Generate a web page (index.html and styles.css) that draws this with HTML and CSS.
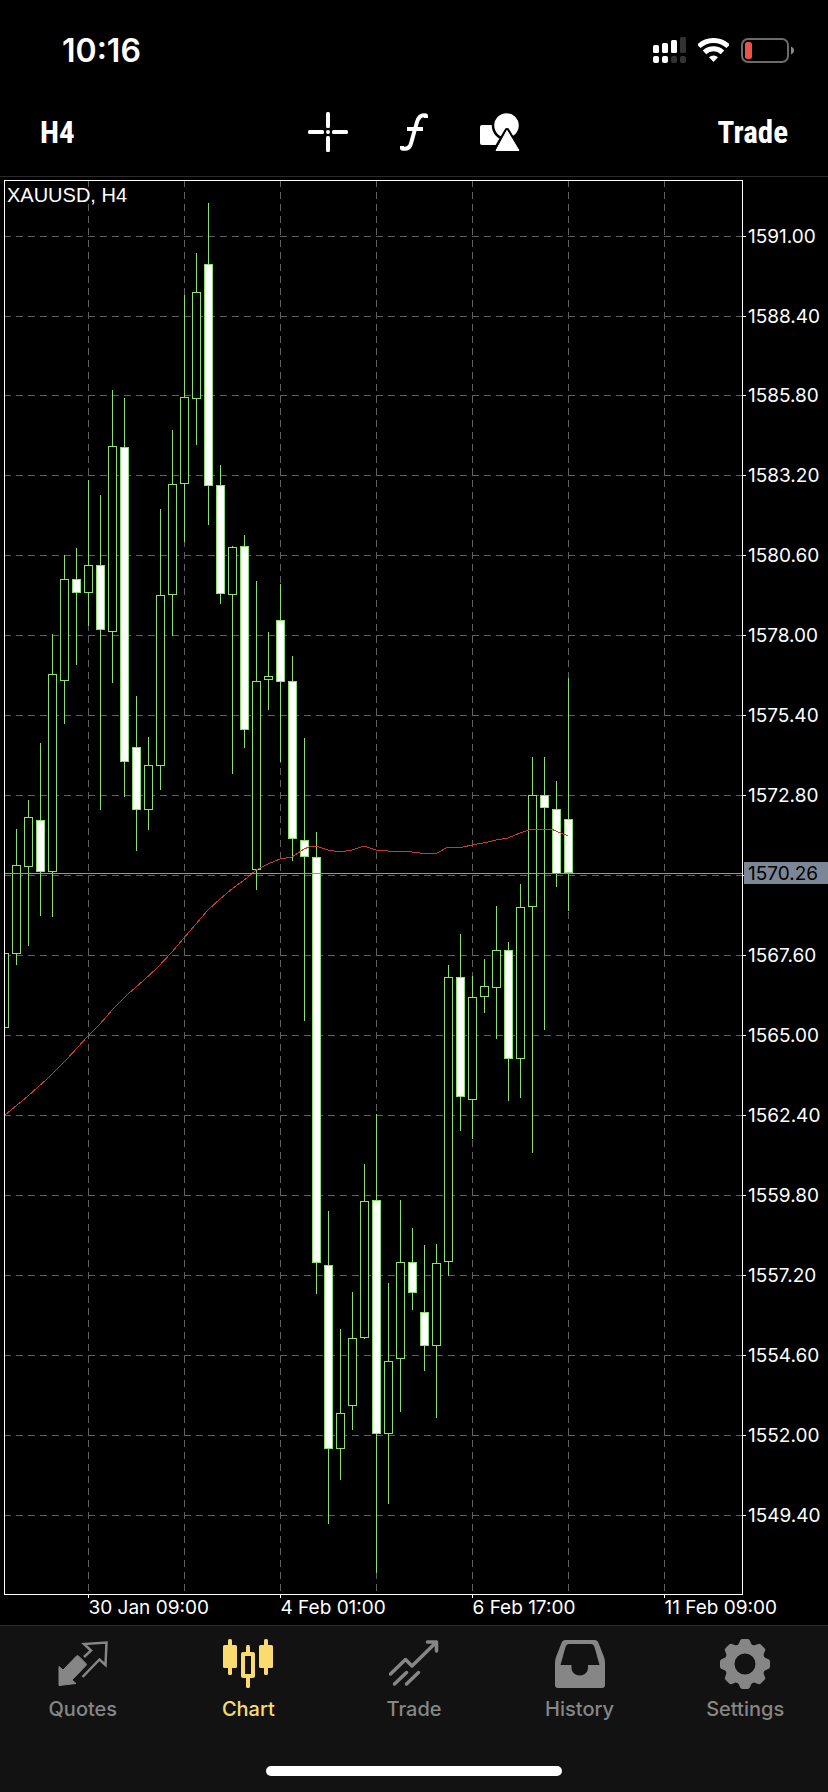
FILE: index.html
```
<!DOCTYPE html>
<html lang="en">
<head>
    <meta charset="UTF-8">
    <meta name="viewport" content="width=device-width, initial-scale=1.0">
    <title>XAUUSD, H4</title>
    <link rel="stylesheet" href="styles.css">
</head>
<body>
<div class="app">
    <header>
        <div class="status-bar">
            <span class="clock">10:16</span>
            <div class="status-icons">
                <svg width="33" height="26" viewBox="0 0 33 26" fill="#fff">
                    <rect x="0" y="8" width="6" height="8" rx="1.5"/>
                    <rect x="9" y="6" width="6" height="10" rx="1.5"/>
                    <rect x="18" y="3" width="6" height="13" rx="1.5"/>
                    <rect x="27" y="0" width="6" height="16" rx="1.5" fill="#333"/>
                    <rect x="0" y="19" width="6" height="7" rx="2"/>
                    <rect x="9" y="19" width="6" height="7" rx="2"/>
                    <rect x="18" y="19" width="6" height="7" rx="2" fill="#333"/>
                    <rect x="27" y="19" width="6" height="7" rx="2" fill="#333"/>
                </svg>
                <svg width="31" height="24" viewBox="0 0 31 24" fill="none" stroke="#fff" stroke-width="5">
                    <path d="M0.8 8.3A21.5 21.5 0 0 1 30.2 8.3"/>
                    <path d="M6.5 14.4A13.2 13.2 0 0 1 24.5 14.4"/>
                    <path d="M15.5 24L11 19.3A6.5 6.5 0 0 1 20 19.3Z" fill="#fff" stroke="none"/>
                </svg>
                <svg width="53" height="25" viewBox="0 0 53 25">
                    <rect x="1" y="1" width="46" height="23" rx="6" fill="none" stroke="#6b6b6b" stroke-width="2"/>
                    <path d="M50 8.5C54 10 54 15 50 16.5Z" fill="#8a8a8a"/>
                    <rect x="4" y="4" width="7" height="17" rx="2.5" fill="#eb5545"/>
                </svg>
            </div>
        </div>
        <div class="toolbar">
            <button class="text-button">H4</button>
            <div class="tools">
                <button class="icon-button" aria-label="Crosshair">
                    <svg width="40" height="40" viewBox="0 0 40 40" fill="#fff">
                        <rect x="18" y="0" width="4" height="16" rx="1.5"/>
                        <rect x="18" y="24" width="4" height="16" rx="1.5"/>
                        <rect x="0" y="18" width="16" height="4" rx="1.5"/>
                        <rect x="24" y="18" width="16" height="4" rx="1.5"/>
                        <circle cx="20" cy="20" r="2"/>
                    </svg>
                </button>
                <button class="icon-button" aria-label="Indicators">
                    <svg width="40" height="40" viewBox="0 0 40 40" fill="none" stroke="#fff" stroke-width="4">
                        <path d="M32 6V3.5C27 2.5 24.5 5 23 10L17 31.5C16 35.5 13 37.5 8 36.5V34" stroke-linejoin="round"/>
                        <path d="M13 17H29"/>
                    </svg>
                </button>
                <button class="icon-button" aria-label="Objects">
                    <svg width="40" height="40" viewBox="0 0 40 40" fill="#fff">
                        <rect x="0" y="13" width="21" height="20" rx="2"/>
                        <circle cx="26.5" cy="13.5" r="13.5" stroke="#000" stroke-width="2.5"/>
                        <path d="M27 18.5L39.5 39H15Z" stroke="#000" stroke-width="5" stroke-linejoin="round"/>
                        <path d="M27 18.5L39 38.5H16Z" stroke="#fff" stroke-width="1" stroke-linejoin="round"/>
                    </svg>
                </button>
            </div>
            <button class="text-button trade-button">Trade</button>
        </div>
    </header>

    <main>
        <svg id="chart" class="chart" viewBox="0 177 828 1448" role="img" aria-label="XAUUSD, H4"></svg>
    </main>

    <nav class="tab-bar">
        <div class="tabs">
            <a href="#quotes" class="tab">
                <svg width="50" height="50" viewBox="0 0 50 50">
                    <path d="M1 27.5L5 31L18.5 17Q19.5 16 20.5 17L28 24.5Q29 25.5 28 26.5L14 41L18 44.5L1 46.5Z" fill="currentColor" stroke="currentColor" stroke-linejoin="round"/>
                    <path d="M24.5 38L41.5 20.5L47.5 26L48.5 3.5L26 5L33 11.5L26 18" fill="none" stroke="currentColor" stroke-width="2.5"/>
                </svg>
                <span>Quotes</span>
            </a>
            <a href="#chart" class="tab active">
                <svg width="50" height="50" viewBox="0 0 50 50" fill="currentColor">
                    <rect x="5" y="0" width="4" height="36" rx="1.5"/>
                    <rect x="0" y="6" width="14" height="23" rx="1.5"/>
                    <rect x="41" y="0" width="4" height="36" rx="1.5"/>
                    <rect x="36" y="6" width="14" height="23" rx="1.5"/>
                    <rect x="23" y="6" width="4" height="9" rx="1.5"/>
                    <rect x="23" y="37" width="4" height="12" rx="1.5"/>
                    <rect x="20" y="15" width="10" height="22" fill="none" stroke="currentColor" stroke-width="4" stroke-linejoin="round"/>
                </svg>
                <span>Chart</span>
            </a>
            <a href="#trade" class="tab">
                <svg width="50" height="50" viewBox="0 0 50 50" fill="none" stroke="currentColor" stroke-width="3.5" stroke-linecap="round" stroke-linejoin="round">
                    <path d="M1.5 35L16.5 20.5L23 27L47 3.5"/>
                    <path d="M38.5 3H47.5V12"/>
                    <path d="M5.5 45L17.5 33.5M17.5 45L29.5 33.5"/>
                </svg>
                <span>Trade</span>
            </a>
            <a href="#history" class="tab">
                <svg width="50" height="50" viewBox="0 0 50 50" fill="currentColor">
                    <path fill-rule="evenodd" d="M10.5 1H39.5Q42.5 1 43.5 4L49 18Q50 21 50 24V46Q50 49 47 49H3Q0 49 0 46V24Q0 21 1 18L6.5 4Q7.5 1 10.5 1ZM5.5 26H16.5V28.5C16.5 39 33 39 33 28.5V26H44.5L39.5 8Q38.5 5 36 5H14Q11.5 5 10.5 8Z"/>
                </svg>
                <span>History</span>
            </a>
            <a href="#settings" class="tab">
                <svg width="50" height="50" viewBox="-25 -25 50 50" fill="currentColor">
                    <circle r="15.5" fill="none" stroke="currentColor" stroke-width="10"/>
                    <g id="teeth"></g>
                </svg>
                <span>Settings</span>
            </a>
        </div>
        <div class="home-indicator"></div>
    </nav>
</div>

<script>
    const chart = document.getElementById('chart');

    const area = { left: 4, top: 180, right: 742, bottom: 1594 };
    const step = 12;

    // high, body top, body bottom, low, 1 = bearish
    const candles = [
        [953, 953, 1027, 1027, 0], [829, 865, 953, 965, 0], [800, 817, 866, 946, 0], [743, 820, 871, 916, 1],
        [634, 674, 871, 917, 0], [555, 579, 680, 724, 0], [548, 579, 592, 665, 1], [480, 565, 592, 626, 0],
        [495, 565, 629, 810, 1], [390, 446, 631, 683, 0], [398, 447, 761, 797, 1], [696, 747, 809, 851, 1],
        [737, 765, 809, 830, 0], [509, 595, 765, 790, 0], [430, 484, 594, 636, 0], [295, 397, 483, 542, 0],
        [253, 292, 398, 445, 0], [203, 264, 485, 525, 1], [465, 485, 593, 604, 1], [546, 547, 594, 774, 0],
        [535, 546, 729, 748, 1], [581, 681, 869, 890, 0], [632, 676, 679, 710, 0], [584, 620, 681, 762, 1],
        [656, 681, 838, 861, 1], [738, 840, 856, 1021, 1], [832, 857, 1262, 1294, 1], [1211, 1265, 1448, 1524, 1],
        [1329, 1413, 1448, 1480, 0], [1292, 1338, 1405, 1430, 0], [1164, 1201, 1337, 1339, 0], [1114, 1200, 1433, 1573, 1],
        [1283, 1361, 1433, 1504, 0], [1200, 1262, 1358, 1412, 0], [1228, 1262, 1292, 1310, 1], [1245, 1312, 1345, 1371, 1],
        [1244, 1263, 1345, 1418, 0], [965, 977, 1261, 1276, 0], [934, 977, 1096, 1131, 1], [976, 997, 1099, 1139, 0],
        [959, 986, 996, 1013, 0], [906, 950, 987, 1039, 0], [942, 950, 1058, 1101, 1], [884, 907, 1058, 1098, 0],
        [757, 795, 906, 1153, 0], [757, 795, 807, 1030, 1], [781, 809, 873, 887, 1], [678, 819, 872, 911, 1]
    ];

    const average = [
        [5, 1115], [28, 1096], [47, 1079], [67, 1059], [88, 1036], [100, 1024], [113, 1009], [128, 994],
        [143, 981], [158, 967], [172, 952], [184, 938], [208, 910], [220, 899], [233, 888], [247, 878],
        [256, 870], [268, 864], [280, 859], [292, 857], [304, 849], [309, 847], [316, 846], [328, 850],
        [340, 852], [352, 850], [364, 846], [376, 850], [388, 851], [403, 851], [420, 853], [437, 853],
        [448, 847], [463, 847], [472, 845], [488, 842], [496, 840], [508, 838], [520, 833], [532, 829],
        [551, 829], [556, 831], [568, 836]
    ];

    const times = ['30 Jan 09:00', '4 Feb 01:00', '6 Feb 17:00', '11 Feb 09:00'];

    function line(cls, x1, y1, x2, y2) {
        return `<line class="${cls}" x1="${x1}" y1="${y1}" x2="${x2}" y2="${y2}"/>`;
    }

    function renderChart() {
        let svg = '';

        // grid and price axis
        for (let i = 0; i <= 16; i++) {
            const row = Math.round(235.6 + i * 79.94);
            const y = row + 0.5;
            svg += line('grid', area.left, y, area.right, y);
            svg += line('frame', area.right, y, area.right + 4, y);
            if (i !== 8) {
                svg += `<text class="axis-label" x="748" y="${row + 7}">${(1591 - i * 2.6).toFixed(2)}</text>`;
            }
        }
        for (let i = 0; i < 7; i++) {
            const x = 88.5 + i * 8 * step;
            svg += line('grid', x, area.top, x, area.bottom);
            if (i % 2 === 0) {
                svg += line('frame', x, area.bottom, x, area.bottom + 4);
                svg += `<text class="axis-label" x="${x}" y="${area.bottom + 20}">${times[i / 2]}</text>`;
            }
        }

        svg += '<clipPath id="plot"><rect x="4" y="180" width="738" height="1414"/></clipPath><g clip-path="url(#plot)">';
        candles.forEach(([high, top, bottom, low, bearish], i) => {
            const x = 4.5 + i * step;
            svg += line('wick', x, high, x, top);
            svg += line('wick', x, bottom, x, low);
            svg += `<rect class="body${bearish ? ' bearish' : ''}" x="${x - 4}" y="${top + 0.5}" width="8" height="${bottom - top}"/>`;
        });
        svg += `<polyline class="average" points="${average.map(p => p.join(',')).join(' ')}"/></g>`;

        // current price
        svg += line('price-line', area.left, 873.5, area.right, 873.5);
        svg += '<rect class="price-box" x="744" y="862" width="84" height="22"/>';
        svg += '<text class="axis-label current" x="748" y="880">1570.26</text>';

        svg += `<rect class="frame" x="${area.left + 0.5}" y="${area.top + 0.5}" width="${area.right - area.left}" height="${area.bottom - area.top}"/>`;
        svg += '<text class="symbol" x="7" y="202">XAUUSD, H4</text>';
        chart.innerHTML = svg;
    }

    function renderTeeth() {
        let teeth = '';
        for (let a = 0; a < 360; a += 45) {
            teeth += `<path d="M-8 -18Q-6.5 -19 -5.5 -22Q-4.5 -25 -3 -25H3Q4.5 -25 5.5 -22Q6.5 -19 8 -18Z" transform="rotate(${a})"/>`;
        }
        document.getElementById('teeth').innerHTML = teeth;
    }

    renderChart();
    renderTeeth();
</script>
</body>
</html>
```
FILE: styles.css
```
:root {
    --bar: #121212;
    --line: #2a2a2a;
    --muted: #868686;
    --active: #fadb70;
    --candle: #8fe070;
}

body {
    font-family: Inter, "Liberation Sans", sans-serif;
    margin: 0;
    background-color: #000;
    color: #fff;
}

.app {
    display: flex;
    flex-direction: column;
    min-height: 100vh;
}

svg {
    display: block;
}

button {
    background: none;
    border: none;
    padding: 0;
    color: inherit;
    cursor: pointer;
}

header {
    border-bottom: 1px solid var(--line);
}

.status-bar {
    display: flex;
    justify-content: space-between;
    align-items: center;
    box-sizing: border-box;
    height: 88px;
    padding: 12px 34px 0 62px;
}

.clock {
    font-size: 32px;
    font-weight: 600;
}

.status-icons {
    display: flex;
    align-items: center;
    gap: 12px;
}

.toolbar {
    display: grid;
    grid-template-columns: 1fr auto 1fr;
    align-items: center;
    height: 88px;
    padding: 0 40px;
}

.text-button {
    font-family: "Roboto Condensed", "Liberation Sans", sans-serif;
    font-size: 31px;
    font-weight: bold;
    justify-self: start;
}

.trade-button {
    justify-self: end;
}

.tools {
    display: flex;
    gap: 46px;
}

.chart {
    width: 100%;
    height: auto;
}

.grid {
    stroke: #606060;
    stroke-dasharray: 7 5;
    shape-rendering: crispEdges;
}

.frame {
    fill: none;
    stroke: #fff;
    shape-rendering: crispEdges;
}

.wick {
    stroke: var(--candle);
    shape-rendering: crispEdges;
}

.body {
    fill: #000;
    stroke: var(--candle);
    shape-rendering: crispEdges;
}

.bearish {
    fill: #fff;
}

.average {
    fill: none;
    stroke: #c0402f;
    shape-rendering: crispEdges;
}

.price-line {
    stroke: #999;
    shape-rendering: crispEdges;
}

.price-box {
    fill: #7b8796;
}

.axis-label {
    fill: #fff;
    font-size: 19px;
}

.current {
    fill: #000;
}

.symbol {
    fill: #fff;
    font-family: "Liberation Sans", sans-serif;
    font-size: 20px;
}

.tab-bar {
    flex: 1;
    background: var(--bar);
    border-top: 1px solid var(--line);
}

.tabs {
    display: grid;
    grid-template-columns: repeat(5, 1fr);
    padding-top: 13px;
}

.tab {
    display: flex;
    flex-direction: column;
    align-items: center;
    gap: 8px;
    color: var(--muted);
    font-size: 20px;
    font-weight: 500;
    line-height: 24px;
    text-decoration: none;
}

.active {
    color: var(--active);
}

.home-indicator {
    width: 296px;
    height: 10px;
    margin: 45px auto 16px;
    border-radius: 5px;
    background: #fff;
}
```
